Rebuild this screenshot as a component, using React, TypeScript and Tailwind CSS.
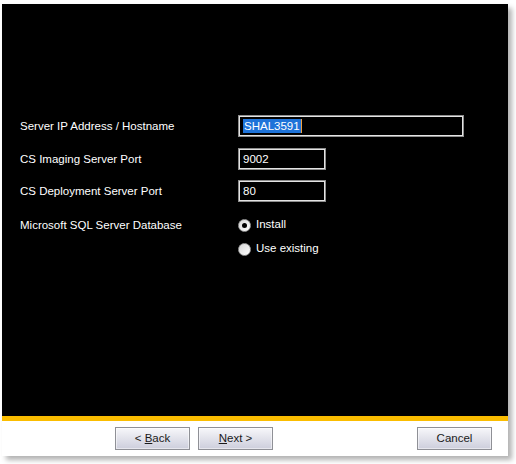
import React from "react";

const FONT = "font-['Tahoma','Liberation_Sans',Arial,sans-serif]";

function Field({ value, width, selected }: { value: string; width: string; selected?: boolean }) {
  return (
    <div className={`flex h-[22px] ${width} items-center border border-[#8e8e8e] bg-black pl-[4px] shadow-[inset_0_0_0_1px_#e4e4e4]`}>
      {selected ? (
        <span className="flex items-center">
          <span className="bg-[#1e73d9] px-[1px] leading-[14px] text-white">{value}</span>
          <span className="h-[14px] w-px bg-[#f0a040]" />
        </span>
      ) : (
        <span className="leading-[14px] text-white">{value}</span>
      )}
    </div>
  );
}

function Radio({ label, checked }: { label: string; checked?: boolean }) {
  return (
    <div className="flex h-4 items-center gap-[5px]">
      <span className="flex h-[13px] w-[13px] items-center justify-center rounded-full border border-[#9a9a9a] bg-gradient-to-br from-[#d8d8d8] to-white">
        {checked && <span className="h-[5px] w-[5px] rounded-full bg-black" />}
      </span>
      <span className="text-white">{label}</span>
    </div>
  );
}

function Btn({ children, className = "" }: { children: React.ReactNode; className?: string }) {
  return (
    <button className={`flex h-[23px] w-[75px] items-center justify-center whitespace-pre border border-[#8f9096] bg-gradient-to-b from-[#f7f7fa] to-[#cdcedc] text-[11.5px] text-[#1a1a1a] shadow-[inset_0_0_0_1px_#ffffff80] ${className}`}>
      {children}
    </button>
  );
}

export default function App() {
  return (
    <div className={`h-[464px] w-[516px] bg-white pl-[2px] pt-[4px] text-[11.5px] ${FONT}`}>
      <div className="flex h-[452px] w-[506px] flex-col shadow-[4px_4px_5px_rgba(0,0,0,0.3)]">
        {/* main black panel */}
        <div className="h-[412px] bg-black pl-[18px] pt-[111px]">
          <div className="grid grid-cols-[218px_1fr] items-center">
            <span className="pt-px text-white">Server IP Address / Hostname</span>
            <Field value="SHAL3591" width="w-[226px]" selected />

            <span className="mt-[11px] pt-px text-white">CS Imaging Server Port</span>
            <div className="mt-[11px]">
              <Field value="9002" width="w-[88px]" />
            </div>

            <span className="mt-[10px] pt-px text-white">CS Deployment Server Port</span>
            <div className="mt-[10px]">
              <Field value="80" width="w-[88px]" />
            </div>

            <span className="mt-[15px] self-start text-white">Microsoft SQL Server Database</span>
            <div className="mt-[15px] flex flex-col gap-[8px]">
              <Radio label="Install" checked />
              <Radio label="Use existing" />
            </div>
          </div>
        </div>

        {/* yellow band */}
        <div className="h-[5px] bg-[#fbbd00]" />

        {/* footer */}
        <div className="flex flex-1 items-start bg-white pt-[6px]">
          <div className="ml-[113px] flex gap-[8px]">
            <Btn>
              {"< "}
              <span className="underline">B</span>
              {"ack"}
            </Btn>
            <Btn>
              <span className="underline">N</span>
              {"ext >"}
            </Btn>
          </div>
          <Btn className="ml-auto mr-[16px]">Cancel</Btn>
        </div>
      </div>
    </div>
  );
}
